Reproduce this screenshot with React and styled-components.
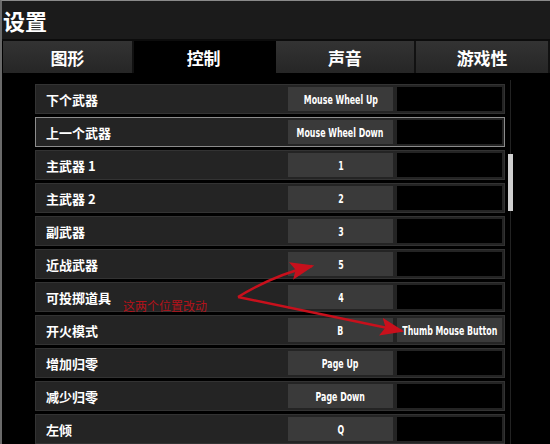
import React from "react";
import styled, { createGlobalStyle } from "styled-components";

const Global = createGlobalStyle`
  html, body {
    margin: 0;
    padding: 0;
    background: #000;
  }
  body {
    font-family: "Noto Sans CJK SC", "Noto Sans", sans-serif;
    color: #fff;
  }
`;

const Window = styled.div`
  position: relative;
  width: 550px;
  height: 444px;
  overflow: hidden;
  background: #000;
  border-left: 2px solid #6a6a6a;
  border-top: 1px solid #8a8a8a;
  box-sizing: border-box;
  display: flex;
  flex-direction: column;
`;

const TitleBar = styled.div`
  height: 39px;
  background: #1b1b1b;
  border-bottom: 2px solid #0c0c0c;
  display: flex;
  align-items: center;
  padding-left: 1px;
  font-size: 22px;
  font-weight: 700;
`;

const Tabs = styled.div`
  display: flex;
  height: 32px;
  margin-left: 1px;
`;

const Tab = styled.div`
  width: ${(p) => p.w}px;
  display: flex;
  align-items: center;
  justify-content: center;
  font-size: 17px;
  font-weight: 700;
  background: ${(p) => (p.active ? "#000" : "linear-gradient(#333, #262626)")};
  border-right: 2px solid ${(p) => (p.active ? "#000" : "#111")};
  box-sizing: border-box;
`;

const Body = styled.div`
  flex: 1;
  display: flex;
  padding: 11px 0 0 33px;
`;

const List = styled.div`
  width: 470px;
  display: flex;
  flex-direction: column;
  gap: 3px;
`;

const Row = styled.div`
  height: 30px;
  flex: none;
  box-sizing: border-box;
  display: flex;
  align-items: stretch;
  gap: 4px;
  padding: 2px 2px 2px 10px;
  background: #242424;
  border: 1px solid ${(p) => (p.selected ? "#8c8c8c" : "#333")};
`;

const Label = styled.div`
  flex: 1;
  display: flex;
  align-items: center;
  font-size: 13px;
  font-weight: 700;
`;

const Key = styled.div`
  width: 105px;
  display: flex;
  align-items: center;
  justify-content: center;
  background: ${(p) => (p.empty ? "#000" : "#3a3a3a")};
  font-family: "DejaVu Sans Condensed", "DejaVu Sans", sans-serif;
  font-weight: 700;
  font-size: 12.5px;
  white-space: nowrap;
  span {
    display: inline-block;
    transform: scaleX(0.7);
  }
`;

const Track = styled.div`
  width: 1px;
  margin: -4px 0 0 5px;
  background: #222;
  position: relative;
`;

const Thumb = styled.div`
  position: absolute;
  left: -2px;
  top: 74px;
  width: 5px;
  height: 57px;
  background: #cfcfcf;
`;

const Note = styled.div`
  position: absolute;
  left: 121px;
  top: 296px;
  font-size: 12px;
  color: #b3121a;
`;

const Arrows = styled.svg`
  position: absolute;
  left: 0;
  top: 0;
  pointer-events: none;
`;

const rows = [
  ["下个武器", "Mouse Wheel Up"],
  ["上一个武器", "Mouse Wheel Down", "", true],
  ["主武器 1", "1"],
  ["主武器 2", "2"],
  ["副武器", "3"],
  ["近战武器", "5"],
  ["可投掷道具", "4"],
  ["开火模式", "B", "Thumb Mouse Button"],
  ["增加归零", "Page Up"],
  ["减少归零", "Page Down"],
  ["左倾", "Q"],
];

export default function App() {
  return (
    <>
      <Global />
      <Window>
        <TitleBar>设置</TitleBar>
        <Tabs>
          <Tab w={131}>图形</Tab>
          <Tab w={142} active>控制</Tab>
          <Tab w={141}>声音</Tab>
          <Tab w={134}>游戏性</Tab>
        </Tabs>
        <Body>
          <List>
            {rows.map(([label, k1, k2, sel]) => (
              <Row key={label} selected={sel}>
                <Label>{label}</Label>
                <Key><span>{k1}</span></Key>
                <Key empty={!k2}><span>{k2}</span></Key>
              </Row>
            ))}
          </List>
          <Track>
            <Thumb />
          </Track>
        </Body>
        <Note>这两个位置改动</Note>
        <Arrows width="550" height="444" viewBox="0 0 550 444">
          <defs>
            <marker id="head" markerWidth="10" markerHeight="7.5" refX="9" refY="3.75" orient="auto" markerUnits="strokeWidth">
              <path d="M0,0 L10,3.75 L0,7.5 L2,3.75 Z" fill="#c8101c" />
            </marker>
          </defs>
          <path d="M236,296 Q272,274 310,265" stroke="#c8101c" strokeWidth="2.4" fill="none" markerEnd="url(#head)" />
          <path d="M236,296 L400,330" stroke="#c8101c" strokeWidth="2.4" fill="none" markerEnd="url(#head)" />
        </Arrows>
      </Window>
    </>
  );
}
